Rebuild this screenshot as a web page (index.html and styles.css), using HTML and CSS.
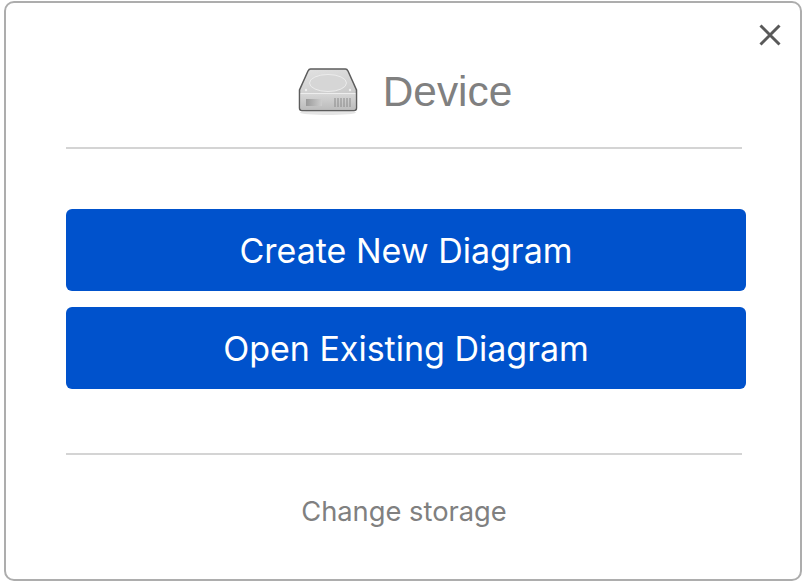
FILE: index.html
```html
<!DOCTYPE html>
<html lang="en">
<head>
    <meta charset="UTF-8">
    <meta name="viewport" content="width=device-width, initial-scale=1.0">
    <title>Device</title>
    <link rel="stylesheet" href="styles.css">
</head>
<body>
    <div class="dialog">
        <button class="close" aria-label="Close">
            <svg width="24" height="24" viewBox="0 0 24 24">
                <path d="M2.5 2.5 L21.5 21.5 M21.5 2.5 L2.5 21.5" stroke="#595959" stroke-width="3" fill="none"/>
            </svg>
        </button>

        <div class="title">
            <svg class="drive" width="62" height="50" viewBox="0 0 62 50">
                <defs>
                    <linearGradient id="driveTop" x1="0" y1="0" x2="0.3" y2="1">
                        <stop offset="0" stop-color="#e2e2e2"/>
                        <stop offset="1" stop-color="#c4c4c4"/>
                    </linearGradient>
                    <linearGradient id="driveFront" x1="0" y1="0" x2="0" y2="1">
                        <stop offset="0" stop-color="#d6d6d6"/>
                        <stop offset="1" stop-color="#bcbcbc"/>
                    </linearGradient>
                    <linearGradient id="driveSlot" x1="0" y1="0" x2="1" y2="0">
                        <stop offset="0" stop-color="#9a9a9a"/>
                        <stop offset="1" stop-color="#cecece"/>
                    </linearGradient>
                </defs>
                <ellipse cx="30" cy="45.500" rx="28" ry="2.500" fill="#000" opacity="0.1"/>
                <path d="M12.500 2 H47.500 Q49 2 50 4 L58.500 23 V41 Q58.500 43.500 56 43.500 H4 Q1.500 43.500 1.500 41 V23 L10 4 Q11 2 12.500 2 Z" fill="url(#driveTop)" stroke="#5c5c5c" stroke-width="1.500"/>
                <path d="M2.500 27 H57.500 V41 Q57.500 42.700 56 42.700 H4 Q2.500 42.700 2.500 41 Z" fill="url(#driveFront)"/>
                <path d="M2.500 26.500 H57.500" stroke="#ededed" stroke-width="1"/>
                <ellipse cx="30" cy="16" rx="18.500" ry="8.500" fill="#d6d6d6" stroke="#ececec"/>
                <circle cx="8" cy="23" r="1.200" fill="#efefef"/>
                <circle cx="52" cy="23" r="1.200" fill="#efefef"/>
                <rect x="8" y="32" width="16" height="7" fill="url(#driveSlot)"/>
                <path d="M37 31 V40 M40 31 V40 M43 31 V40 M46 31 V40 M49 31 V40 M52 31 V40" stroke="#8a8a8a" stroke-width="1"/>
            </svg>
            <span>Device</span>
        </div>

        <div class="rule"></div>

        <div class="actions">
            <button class="action">Create New Diagram</button>
            <button class="action">Open Existing Diagram</button>
        </div>

        <div class="rule"></div>

        <div class="change">Change storage</div>
    </div>
</body>
</html>
```

FILE: styles.css
```css
html, body {
    margin: 0;
    height: 100%;
    background: white;
    overflow: hidden;
}
body {
    padding: 1px 2px 3px 4px;
    box-sizing: border-box;
    font-family: Inter, 'Liberation Sans', sans-serif;
}
.dialog {
    position: relative;
    height: 100%;
    box-sizing: border-box;
    padding: 0 54px 0 60px;
    background: white;
    border: 2px solid #adadad;
    border-radius: 10px;
}
.close {
    position: absolute;
    top: 20px;
    right: 18px;
    width: 24px;
    height: 24px;
    padding: 0;
    border: none;
    background: none;
}
.close svg {
    display: block;
}
.title {
    display: flex;
    align-items: center;
    justify-content: center;
    gap: 23px;
    height: 144px;
    padding: 33px 2px 0 0;
    box-sizing: border-box;
    font-family: 'Liberation Sans', sans-serif;
    font-size: 42.400px;
    color: #808080;
}
.rule {
    height: 2px;
    margin-right: 4px;
    background: #d4d4d4;
}
.actions {
    display: flex;
    flex-direction: column;
    gap: 16px;
    padding: 60px 0 64px;
}
.action {
    height: 82px;
    padding: 0;
    border: none;
    border-radius: 6px;
    background: #0052cc;
    color: white;
    font-family: inherit;
    font-size: 34px;
}
.change {
    margin-top: 40px;
    margin-right: 4px;
    text-align: center;
    font-size: 27.300px;
    color: #808080;
}
```
